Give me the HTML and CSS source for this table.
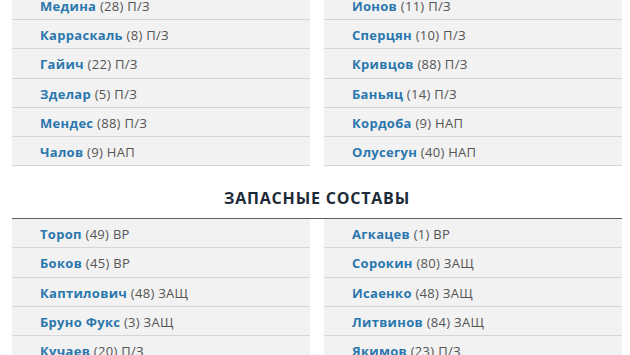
FILE: index.html
```html
<!DOCTYPE html>
<html lang="ru">
<head>
<meta charset="utf-8">
<link rel="stylesheet" href="styles.css">
</head>
<body>
<div class="page">
  <div class="lineup">
    <ul class="team">
      <li class="row"><span class="name">Медина</span> (28) П/З</li>
      <li class="row"><span class="name">Карраскаль</span> (8) П/З</li>
      <li class="row"><span class="name">Гайич</span> (22) П/З</li>
      <li class="row"><span class="name">Зделар</span> (5) П/З</li>
      <li class="row"><span class="name">Мендес</span> (88) П/З</li>
      <li class="row"><span class="name">Чалов</span> (9) НАП</li>
    </ul>
    <ul class="team">
      <li class="row"><span class="name">Ионов</span> (11) П/З</li>
      <li class="row"><span class="name">Сперцян</span> (10) П/З</li>
      <li class="row"><span class="name">Кривцов</span> (88) П/З</li>
      <li class="row"><span class="name">Баньяц</span> (14) П/З</li>
      <li class="row"><span class="name">Кордоба</span> (9) НАП</li>
      <li class="row"><span class="name">Олусегун</span> (40) НАП</li>
    </ul>
  </div>
  <h2 class="section-title">ЗАПАСНЫЕ СОСТАВЫ</h2>
  <div class="lineup subs">
    <ul class="team">
      <li class="row"><span class="name">Тороп</span> (49) ВР</li>
      <li class="row"><span class="name">Боков</span> (45) ВР</li>
      <li class="row"><span class="name">Каптилович</span> (48) ЗАЩ</li>
      <li class="row"><span class="name">Бруно Фукс</span> (3) ЗАЩ</li>
      <li class="row"><span class="name">Кучаев</span> (20) П/З</li>
    </ul>
    <ul class="team">
      <li class="row"><span class="name">Агкацев</span> (1) ВР</li>
      <li class="row"><span class="name">Сорокин</span> (80) ЗАЩ</li>
      <li class="row"><span class="name">Исаенко</span> (48) ЗАЩ</li>
      <li class="row"><span class="name">Литвинов</span> (84) ЗАЩ</li>
      <li class="row"><span class="name">Якимов</span> (23) П/З</li>
    </ul>
  </div>
</div>
</body>
</html>
```
FILE: styles.css
```css
html, body {
  margin: 0;
  padding: 0;
  background: #ffffff;
}
body {
  font-family: "Open Sans", "DejaVu Sans", sans-serif;
  overflow: hidden;
}
.page {
  width: 610px;
  margin: -9.25px 0 0 12px;
}
.lineup {
  display: grid;
  grid-template-columns: 298px 298px;
  column-gap: 14px;
}
.subs {
  border-top: 1px solid #5f5f5f;
}
.team {
  list-style: none;
  margin: 0;
  padding: 0;
  background: #f2f2f2;
}
.row {
  box-sizing: border-box;
  height: 29.25px;
  padding: 2px 0 0 28px;
  line-height: 26px;
  border-bottom: 1px solid #d6d6d6;
  font-size: 13px;
  letter-spacing: 0.3px;
  color: #555555;
  white-space: nowrap;
}
.name {
  font-weight: 700;
  color: #2a77ae;
}
.section-title {
  margin: 0;
  box-sizing: border-box;
  height: 51.75px;
  padding-top: 22px;
  line-height: 20px;
  text-align: center;
  font-size: 16px;
  font-weight: 700;
  color: #1d2a37;
  letter-spacing: 0.8px;
}
```
